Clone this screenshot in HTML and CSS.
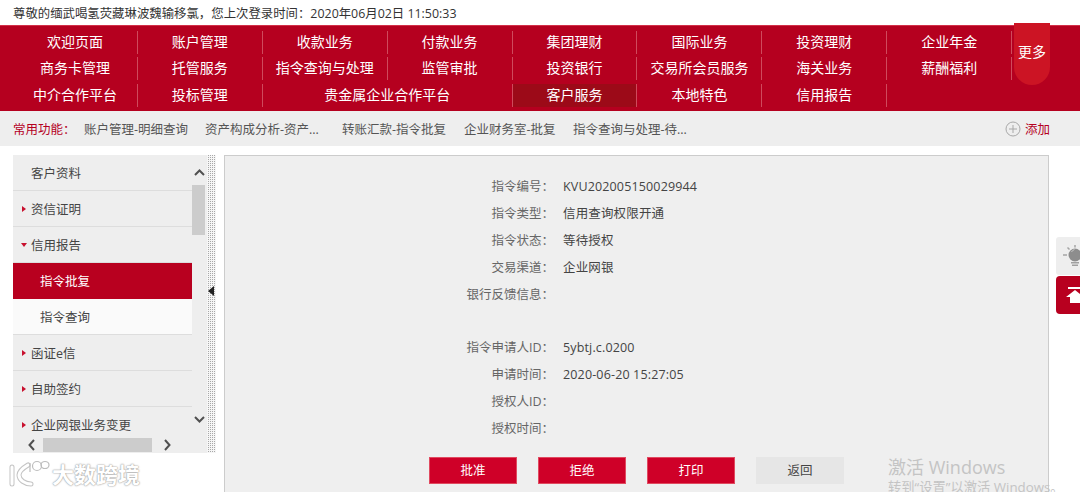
FILE: index.html
```html
<!DOCTYPE html>
<html lang="zh-CN">
<head>
    <meta charset="UTF-8">
    <title>企业网银</title>
    <link rel="stylesheet" href="styles.css">
</head>
<body>
<div class="page">
    <!-- Welcome line -->
    <div class="welcome">尊敬的缅武喝氢荧藏琳波魏输移氯，您上次登录时间：2020年06月02日 11:50:33</div>

    <!-- Main nav -->
    <div class="navbar">
        <div class="nav-grid">
            <a>欢迎页面</a><a>账户管理</a><a>收款业务</a><a>付款业务</a><a>集团理财</a><a>国际业务</a><a>投资理财</a><a>企业年金</a>
            <a>商务卡管理</a><a>托管服务</a><a>指令查询与处理</a><a>监管审批</a><a>投资银行</a><a>交易所会员服务</a><a>海关业务</a><a>薪酬福利</a>
            <a>中介合作平台</a><a>投标管理</a><a class="wide">贵金属企业合作平台</a><a class="current">客户服务</a><a>本地特色</a><a>信用报告</a><a class="blank"></a>
        </div>
        <div class="more">更多</div>
    </div>

    <!-- Common functions -->
    <div class="common">
        <span class="common-title">常用功能：</span>
        <span class="common-item w1">账户管理-明细查询</span>
        <span class="common-item w2">资产构成分析-资产...</span>
        <span class="common-item w3">转账汇款-指令批复</span>
        <span class="common-item w4">企业财务室-批复</span>
        <span class="common-item w5">指令查询与处理-待...</span>
        <span class="add">
            <svg width="16" height="16" viewBox="0 0 16 16"><circle cx="8" cy="8" r="7" fill="none" stroke="#a8a8a8"/><path d="M4 8h8M8 4v8" stroke="#a8a8a8"/></svg>
            添加
        </span>
    </div>

    <div class="content">
        <!-- Left menu -->
        <div class="side">
            <div class="side-top">
                <ul class="menu">
                    <li class="plain">客户资料</li>
                    <li class="closed">资信证明</li>
                    <li class="open">信用报告</li>
                    <li class="child active">指令批复</li>
                    <li class="child">指令查询</li>
                    <li class="closed">函证e信</li>
                    <li class="closed">自助签约</li>
                    <li class="closed">企业网银业务变更</li>
                </ul>
                <div class="vscroll">
                    <svg width="15" height="10" viewBox="0 0 15 10"><path d="M3 7l4.500-4.500L12 7" fill="none" stroke="#505050" stroke-width="2"/></svg>
                    <div class="vthumb"></div>
                    <svg class="vdown" width="15" height="10" viewBox="0 0 15 10"><path d="M3 3l4.500 4.500L12 3" fill="none" stroke="#505050" stroke-width="2"/></svg>
                </div>
            </div>
            <div class="hscroll">
                <svg width="10" height="14" viewBox="0 0 10 14"><path d="M7 2L2.500 7 7 12" fill="none" stroke="#505050" stroke-width="2"/></svg>
                <div class="hthumb"></div>
                <svg width="10" height="14" viewBox="0 0 10 14"><path d="M3 2l4.500 5L3 12" fill="none" stroke="#505050" stroke-width="2"/></svg>
            </div>
        </div>

        <!-- Splitter -->
        <div class="splitter"><span class="splitter-arrow"></span></div>

        <!-- Detail panel -->
        <div class="panel">
            <dl class="detail">
                <dt>指令编号：</dt><dd>KVU202005150029944</dd>
                <dt>指令类型：</dt><dd>信用查询权限开通</dd>
                <dt>指令状态：</dt><dd>等待授权</dd>
                <dt>交易渠道：</dt><dd>企业网银</dd>
                <dt>银行反馈信息：</dt><dd></dd>
                <dt></dt><dd></dd>
                <dt>指令申请人ID：</dt><dd>5ybtj.c.0200</dd>
                <dt>申请时间：</dt><dd>2020-06-20 15:27:05</dd>
                <dt>授权人ID：</dt><dd></dd>
                <dt>授权时间：</dt><dd></dd>
            </dl>
            <div class="buttons">
                <button class="btn">批准</button>
                <button class="btn">拒绝</button>
                <button class="btn">打印</button>
                <button class="btn btn-back">返回</button>
            </div>
        </div>
    </div>

    <!-- Floating tools on the right edge -->
    <div class="tools">
        <div class="tool-light">
            <svg width="24" height="38" viewBox="0 0 24 38">
                <circle cx="19" cy="18" r="6.500" fill="#8d8d8d"/>
                <path d="M15.500 15a5 5 0 0 1 3-2.500" fill="none" stroke="#c8c8c8"/>
                <rect x="15" y="25" width="8" height="1.500" fill="#a0a0a0"/>
                <rect x="16" y="27.500" width="6" height="1.500" fill="#a0a0a0"/>
                <path d="M7 18h4M11.500 10.500l2 2M19 8v2.500" stroke="#a5a5a5" stroke-width="1.500"/>
            </svg>
        </div>
        <div class="tool-top">
            <svg width="24" height="20" viewBox="0 0 24 20"><path d="M12 2h14v2H12zM19 5l9 7h-4v6H14v-6h-4z" fill="#fff"/></svg>
        </div>
    </div>

    <!-- Windows activation mark -->
    <div class="activate">
        <div class="activate-big">激活 Windows</div>
        <div class="activate-small">转到“设置”以激活 Windows。</div>
    </div>

    <!-- Source watermark -->
    <div class="mark">
        <svg width="42" height="30" viewBox="0 0 42 30">
            <g fill="none" stroke="#c4c4c4" stroke-width="5" stroke-linecap="round" stroke-linejoin="round">
                <path d="M4 9v17M20 7c-5 3-9 6-9 10 0 5 6 9 12 9"/>
            </g>
            <g fill="none" stroke="#fff" stroke-width="3" stroke-linecap="round" stroke-linejoin="round">
                <path d="M4 9v17M20 7c-5 3-9 6-9 10 0 5 6 9 12 9"/>
            </g>
            <g fill="none" stroke="#bdbdbd" stroke-width="1.200">
                <path d="M22 5v9"/>
                <circle cx="29" cy="8" r="4.500"/>
                <ellipse cx="37" cy="7" rx="4" ry="3.500"/>
            </g>
        </svg>
        <span class="mark-text">大数跨境</span>
    </div>
</div>
</body>
</html>
```

FILE: styles.css
```css
/* Page */
* {
    box-sizing: border-box;
}

body {
    margin: 0;
    background-color: #fff;
    color: #444;
    font-family: 'Open Sans', 'Noto Sans CJK SC', sans-serif;
    font-size: 12.5px;
}

.page {
    position: relative;
    height: 492px;
    overflow: hidden;
}

/* Welcome line */
.welcome {
    height: 25px;
    padding-left: 13px;
    font-size: 12.4px;
    line-height: 28px;
    color: #333;
}

/* Main nav */
.navbar {
    position: relative;
    height: 86px;
    padding: 5px 0 0 13px;
    background-color: #b5001f;
    border-top: 1px solid #d23048;
}

.nav-grid {
    display: grid;
    grid-template-columns: repeat(8, 124.9px);
    grid-auto-rows: 23px;
    row-gap: 3.3px;
}

.nav-grid a {
    border-right: 1px solid #cf4a5c;
    color: #fff;
    font-size: 14px;
    line-height: 21px;
    text-align: center;
}

.nav-grid .wide {
    grid-column: span 2;
}

.nav-grid .current {
    background-color: #9c0a18;
}

.nav-grid .blank {
    border-right: none;
}

.more {
    position: absolute;
    top: -3px;
    left: 1014px;
    width: 36px;
    height: 62px;
    border-radius: 0 0 18px 18px;
    background-color: #cc1424;
    color: #fff;
    font-size: 14px;
    line-height: 58px;
    text-align: center;
}

/* Common functions */
.common {
    display: flex;
    align-items: center;
    height: 35px;
    padding-left: 13px;
    background-color: #eee;
    color: #555;
}

.common-title {
    width: 71px;
    color: #b5001f;
}

.common-item {
    white-space: nowrap;
}

.w1 { width: 121px; }
.w2 { width: 137px; }
.w3 { width: 122px; }
.w4 { width: 109px; }
.w5 { width: 120px; }

.add {
    display: flex;
    align-items: center;
    gap: 4px;
    margin-left: 312px;
    color: #b5001f;
}

/* Content area */
.content {
    display: flex;
    align-items: flex-start;
    padding: 9px 0 0 13px;
}

.side {
    width: 194px;
    height: 298px;
    background-color: #eee;
}

.side-top {
    display: flex;
    height: 282px;
}

.menu {
    width: 179px;
    margin: 0;
    padding: 0;
    list-style: none;
    overflow: hidden;
}

.menu li {
    position: relative;
    height: 36px;
    padding-left: 18px;
    border-bottom: 1px solid #ddd;
    line-height: 37px;
    color: #444;
}

.menu .closed::before {
    content: "";
    position: absolute;
    top: 15px;
    left: 9px;
    border-left: 4px solid #c8102e;
    border-top: 3px solid transparent;
    border-bottom: 3px solid transparent;
}

.menu .open::before {
    content: "";
    position: absolute;
    top: 16px;
    left: 8px;
    border-top: 4px solid #c8102e;
    border-left: 3px solid transparent;
    border-right: 3px solid transparent;
}

.menu .child {
    padding-left: 27px;
    background-color: #fafafa;
}

.menu .active {
    background-color: #b8001f;
    border-bottom-color: #b8001f;
    color: #fff;
}

.vscroll {
    position: relative;
    width: 15px;
    padding-top: 13px;
}

.vscroll svg {
    position: absolute;
    top: 13px;
    left: 0;
}

.vscroll .vdown {
    top: 259px;
}

.vthumb {
    width: 13px;
    height: 50px;
    margin-top: 17px;
    background-color: #ccc;
}

.hscroll {
    display: flex;
    align-items: center;
    width: 179px;
    height: 16px;
    padding-left: 14px;
}

.hthumb {
    width: 109px;
    height: 14px;
    margin: 0 10px 0 6px;
    background-color: #ccc;
}

/* Splitter */
.splitter {
    position: relative;
    width: 9px;
    height: 298px;
    background: conic-gradient(#a8a8a8 25%, #f6f6f6 0) 0 0 / 2px 2px;
}

.splitter-arrow {
    position: absolute;
    top: 131px;
    left: 1px;
    border-right: 6px solid #222;
    border-top: 5px solid transparent;
    border-bottom: 5px solid transparent;
}

/* Detail panel */
.panel {
    width: 825px;
    height: 340px;
    margin-left: 8px;
    background-color: #efefef;
    border: 1px solid #ccc;
    border-bottom: none;
}

.detail {
    display: grid;
    grid-template-columns: 329px 1fr;
    grid-auto-rows: 26.9px;
    column-gap: 9px;
    margin: 18px 0 0;
    line-height: 26.9px;
}

.detail dt {
    color: #666;
    text-align: right;
}

.detail dd {
    margin: 0;
    color: #444;
    letter-spacing: 0.15px;
}

.buttons {
    display: flex;
    gap: 21px;
    margin: 14px 0 0 204px;
}

.btn {
    width: 88px;
    height: 27px;
    padding: 0 0 2px;
    background-color: #cf0028;
    border: 1px solid #e04a60;
    color: #fff;
    font-family: inherit;
    font-size: 12.5px;
}

.btn-back {
    background-color: #e6e6e6;
    border-color: #e6e6e6;
    color: #444;
}

/* Floating tools */
.tools {
    position: absolute;
    top: 237px;
    left: 1056px;
    width: 24px;
}

.tool-light {
    height: 38px;
    background-color: #eee;
    border-radius: 3px 0 0 3px;
}

.tool-top {
    display: flex;
    align-items: center;
    height: 38px;
    margin-top: 1px;
    background-color: #b8001f;
    border-radius: 4px 0 0 4px;
}

/* Activation mark */
.activate {
    position: absolute;
    top: 455px;
    left: 888px;
    color: #c4c4c4;
    white-space: nowrap;
}

.activate-big {
    font-size: 18px;
    line-height: 24px;
}

.activate-small {
    font-size: 13.3px;
    line-height: 16px;
}

/* Source watermark */
.mark {
    position: absolute;
    top: 457px;
    left: 8px;
    display: flex;
    align-items: center;
    gap: 2px;
}

.mark-text {
    color: #fff;
    font-size: 22px;
    font-weight: 700;
    text-shadow: 0 0 2px #999, 0 0 1px #999;
}
```
